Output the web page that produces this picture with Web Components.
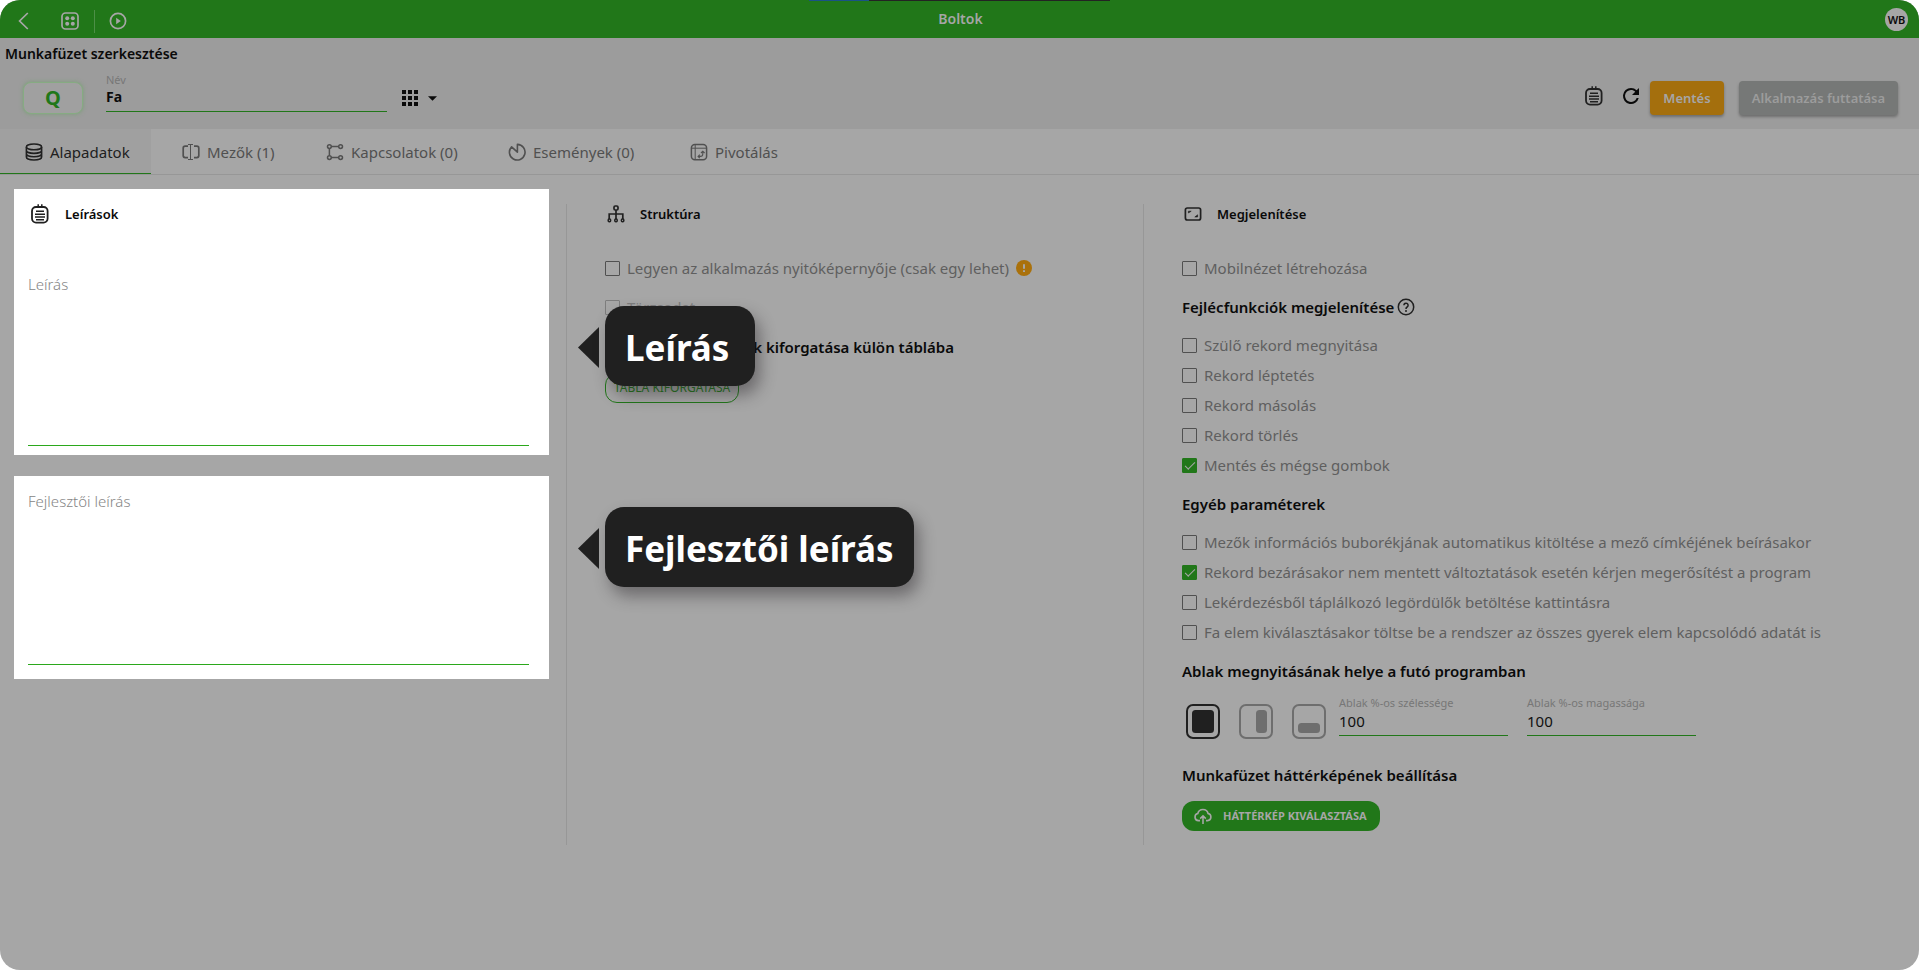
<!DOCTYPE html>
<html lang="hu">
<head>
<meta charset="utf-8">
<title>Munkafüzet szerkesztése</title>
<style>
  html { background: #fff; }
  body { margin: 0; font: 15px/20px "Noto Sans", "Open Sans", sans-serif; color: #0a0a0a; }
  :root {
    --green: #217719; --line: #979797; --paper: #a6a6a6; --bar: #9c9c9c;
  }
</style>
</head>
<body>
<app-shell>
  <top-bar slot="top" name="Boltok" initials="WB"></top-bar>
  <page-head slot="head" heading="Munkafüzet szerkesztése"></page-head>
  <tab-strip slot="tabs"></tab-strip>

  <form-column class="first">
    <focus-card>
      <section-title slot="title" icon="notes">Leírások</section-title>
      <note-field label="Leírás" style="--area: 172px"></note-field>
      <call-out slot="tip" style="--top: 117px">Leírás</call-out>
    </focus-card>
    <focus-card style="padding-bottom: 14px">
      <note-field label="Fejlesztői leírás" style="--area: 174px"></note-field>
      <call-out slot="tip" style="--top: 31px">Fejlesztői leírás</call-out>
    </focus-card>
  </form-column>

  <form-column class="ruled">
    <section-title icon="tree">Struktúra</section-title>
    <check-list style="--step: 39px; --after: 6px">
      <check-row label="Legyen az alkalmazás nyitóképernyője (csak egy lehet)" warn></check-row>
      <check-row label="Törzsadat" disabled></check-row>
    </check-list>
    <sub-title>Megadott adatmezők kiforgatása külön táblába</sub-title>
    <pill-button kind="outline">TÁBLA KIFORGATÁSA</pill-button>
  </form-column>

  <form-column class="ruled">
    <section-title icon="frame">Megjelenítése</section-title>
    <check-list><check-row label="Mobilnézet létrehozása"></check-row></check-list>
    <sub-title help>Fejlécfunkciók megjelenítése</sub-title>
    <check-list>
      <check-row label="Szülő rekord megnyitása"></check-row>
      <check-row label="Rekord léptetés"></check-row>
      <check-row label="Rekord másolás"></check-row>
      <check-row label="Rekord törlés"></check-row>
      <check-row label="Mentés és mégse gombok" checked></check-row>
    </check-list>
    <sub-title>Egyéb paraméterek</sub-title>
    <check-list>
      <check-row label="Mezők információs buborékjának automatikus kitöltése a mező címkéjének beírásakor"></check-row>
      <check-row label="Rekord bezárásakor nem mentett változtatások esetén kérjen megerősítést a program" checked></check-row>
      <check-row label="Lekérdezésből táplálkozó legördülők betöltése kattintásra"></check-row>
      <check-row label="Fa elem kiválasztásakor töltse be a rendszer az összes gyerek elem kapcsolódó adatát is"></check-row>
    </check-list>
    <sub-title>Ablak megnyitásának helye a futó programban</sub-title>
    <window-place></window-place>
    <sub-title>Munkafüzet háttérképének beállítása</sub-title>
    <pill-button kind="solid">HÁTTÉRKÉP KIVÁLASZTÁSA</pill-button>
  </form-column>
</app-shell>

<script>
const svg = (w, h, box, body) =>
  `<svg width="${w}" height="${h}" viewBox="${box}" fill="none" stroke="currentColor" aria-hidden="true">${body}</svg>`;

const ICONS = {
  notes: svg(20, 20, '0 0 20 20', '<rect x="2" y="3" width="15.600" height="15.600" rx="4" stroke-width="1.800"/><path d="M8.200 .2v3M11.800 .2v3M6 7.200h8M5 10.200h10M5 13h10M6 15.800h8" stroke-width="1.500"/>'),
  tree: svg(18, 18, '0 0 18 18', '<rect x="7" y="1" width="4" height="4" rx="1.2" stroke-width="1.7"/><path d="M9 5v9M2.2 14V9h13.6v5" stroke-width="1.7"/><rect x="1.2" y="14" width="2.4" height="2.8" rx="1" stroke-width="1.5"/><rect x="7.8" y="14" width="2.4" height="2.8" rx="1" stroke-width="1.5"/><rect x="14.4" y="14" width="2.4" height="2.8" rx="1" stroke-width="1.5"/>'),
  frame: svg(18, 18, '0 0 18 18', '<rect x="1.4" y="3" width="15.2" height="12" rx="2" stroke-width="1.7"/><path d="M4.400 8V6.200h2.800z M13.600 9.800v2.200h-2.800z" fill="currentColor" stroke-width=".6"/>'),
  data: svg(18, 18, '0 0 18 18', '<ellipse cx="9" cy="3.9" rx="7.6" ry="2.9" stroke-width="1.6"/><path d="M1.4 4v10c0 1.7 3.4 3 7.6 3s7.6-1.3 7.6-3V4M1.4 7.4c0 1.7 3.4 3 7.6 3s7.6-1.3 7.6-3M1.4 10.8c0 1.7 3.4 3 7.6 3s7.6-1.3 7.6-3" stroke-width="1.6"/>'),
  field: svg(18, 18, '0 0 18 18', '<path d="M6 3.200H3.200Q1.200 3.200 1.200 5.200v7.400q0 2 2 2H6M12 3.2h2.8q2 0 2 2v7.4q0 2-2 2H12" stroke-width="1.7"/><path d="M8.500 1v16M6 1.500h5M6 16.500h5" stroke-width="1"/>'),
  links: svg(18, 18, '0 0 18 18', '<g stroke-width="1.5"><circle cx="3.4" cy="3.6" r="1.9"/><circle cx="14.6" cy="3.6" r="1.9"/><circle cx="3.4" cy="14.6" r="1.9"/><circle cx="14.6" cy="14.6" r="1.9"/><path d="M5.4 3.6h7.2M5.4 14.6h7.2M3.4 5.6v7"/></g>'),
  event: svg(18, 18, '0 0 18 18', '<path d="M3.600 3.800A7.800 7.800 0 1 0 9.400 1.400V9.200z" stroke-width="1.6" stroke-linejoin="round"/>'),
  pivot: svg(18, 18, '0 0 18 18', '<rect x="1.400" y="1.400" width="15.200" height="15.400" rx="3.500" stroke-width="1.500"/><path d="M1.400 5.200h15.200M5.200 1.400v15.400" stroke-width="1"/><path d="M8.400 13.400h2q2.400 0 2.400-2.400V8.600M11 10l1.800-1.800 1.800 1.800M9.800 11.700l-1.700 1.700 1.700 1.700" stroke-width="1.100"/>'),
  back: svg(20, 20, '0 0 20 20', '<path d="M14.800 2 6.600 10l8.200 8" stroke-width="1.700"/>'),
  apps: svg(18, 18, '0 0 18 18', '<rect x="1" y="1" width="16" height="16" rx="3.500" stroke-width="1.700"/><g fill="currentColor" stroke="none"><circle cx="6.200" cy="6.200" r="2"/><circle cx="11.800" cy="6.200" r="2"/><circle cx="6.200" cy="11.800" r="2"/><circle cx="11.800" cy="11.800" r="2"/></g>'),
  play: svg(18, 18, '0 0 18 18', '<circle cx="9" cy="9" r="7.600" stroke-width="1.700"/><path d="M7.200 5.800v6.400L11.800 9z" fill="currentColor" stroke="none"/>'),
  reload: svg(24, 24, '0 0 24 24', '<path d="M17.650 6.350A7.958 7.958 0 0 0 12 4a8 8 0 1 0 7.730 10h-2.080A6 6 0 1 1 12 6c1.660 0 3.140.690 4.220 1.780L13 11h7V4z" fill="currentColor" stroke="none"/>'),
  grid: svg(16, 16, '0 0 16 16', '<path d="M0 0h4v4H0zM6 0h4v4H6zM12 0h4v4h-4zM0 6h4v4H0zM6 6h4v4H6zM12 6h4v4h-4zM0 12h4v4H0zM6 12h4v4H6zM12 12h4v4h-4z" fill="currentColor" stroke="none"/>'),
  caret: svg(9, 5, '0 0 10 5', '<path d="M0 0h10L5 5z" fill="currentColor" stroke="none"/>'),
  help: svg(18, 18, '0 0 18 18', '<circle cx="9" cy="9" r="7.700" stroke-width="1.500"/><path d="M6.900 7.300a2.100 2.100 0 1 1 3.300 1.700c-.800.500-1.200.900-1.200 1.900" stroke-width="1.500"/><circle cx="9" cy="12.900" r="1" fill="currentColor" stroke="none"/>'),
  warn: svg(16, 16, '0 0 16 16', '<circle cx="8" cy="8" r="8" fill="#aa710b" stroke="none"/><path d="M8 4.200v4.600M8 10.200v1.800" stroke="#a6a6a6" stroke-width="2"/>'),
  cloud: svg(20, 18, '0 0 20 18', '<path d="M7 13.600H5.400a3.600 3.600 0 0 1-.6-7.100 5.300 5.300 0 0 1 10.300 0 3.600 3.600 0 0 1-.5 7.100H13M10 17V9.200M7.200 11.600 10 8.800l2.800 2.800" stroke-width="1.600"/>'),
};

const define = (name, css, html) => customElements.define(name, class extends HTMLElement {
  connectedCallback() {
    if (this.shadowRoot) return;
    const root = this.attachShadow({ mode: 'open' });
    root.innerHTML = `<style>*,:host{box-sizing:border-box} svg{display:block;flex:none} button{font:inherit;color:inherit;border:0;padding:0;background:none;cursor:pointer} ${css}</style>${html(this)}`;
  }
});

define('app-shell', `
  :host { display: flex; flex-direction: column; min-height: 100vh; background: var(--paper); border-radius: 20px; overflow: hidden; }
  main { display: grid; grid-template-columns: 566fr 577fr 776fr; padding-top: 14px; }
`, () => `<slot name="top"></slot><slot name="head"></slot><slot name="tabs"></slot><main><slot></slot></main>`);

define('top-bar', `
  :host { display: block; background: var(--green); color: #a6a6a6; }
  header { position: relative; display: grid; grid-template-columns: 1fr auto 1fr; align-items: center; height: 38px; padding: 0 11px 0 13px; }
  nav { display: flex; align-items: center; padding-top: 4px; }
  nav button { display: grid; }
  .apps { margin-left: 28px; }
  .play { margin-left: 15px; padding-left: 14px; border-left: 1px solid #4d8f47; height: 23px; align-content: center; }
  h1 { margin: 0; font-size: 14px; line-height: 20px; font-weight: 600; }
  .who { justify-self: end; width: 23px; height: 23px; border-radius: 50%; background: #a6a6a6; color: #0a0a0a; font-size: 11px; line-height: 23px; font-weight: 600; text-align: center; }
  i { position: absolute; top: 0; left: 809px; width: 301px; height: 1px; background: linear-gradient(90deg, #1a5286 60px, #232323 60px); }
`, el => `<header><i></i>
  <nav><button aria-label="Vissza">${ICONS.back}</button><button class="apps" aria-label="Alkalmazások">${ICONS.apps}</button><button class="play" aria-label="Indítás">${ICONS.play}</button></nav>
  <h1>${el.getAttribute('name')}</h1><button class="who">${el.getAttribute('initials')}</button></header>`);

define('page-head', `
  :host { display: block; background: var(--bar); height: 91px; padding: 6px 21px 0 0; }
  h2 { margin: 0 0 0 5px; font: 600 14px/20px "Noto Sans", sans-serif; }
  .row { display: flex; align-items: flex-start; padding: 8px 0 0 23px; }
  .q { width: 60px; height: 32px; margin: 10px 23px 0 0; border: 1px solid #86ab82; border-radius: 8px; background: #a0a0a0; box-shadow: 0 0 4px #7b9e78; color: var(--green); font: 700 20px/28px "Noto Sans", sans-serif; text-align: center; }
  .field { width: 281px; border-bottom: 1px solid var(--green); height: 40px; }
  label { display: block; font-size: 11px; line-height: 16px; color: #777; }
  input { display: block; width: 100%; border: 0; padding: 0; background: none; font: 700 14px/20px "Noto Sans", sans-serif; color: #0a0a0a; outline: 0; height: 18px; }
  .pick { display: flex; align-items: center; gap: 10px; margin: 18px auto 0 15px; }
  .ico { margin: 13px 15px 0 0; height: 22px; display: grid; align-content: center; }
  .save, .run { height: 34px; margin-top: 9px; border-radius: 4px; font-size: 13px; line-height: 34px; font-weight: 600; color: #a6a6a6; box-shadow: 0 2px 3px #6e6e6e; }
  .save { width: 74px; background: #a46f0d; margin-left: 7px; }
  .run { width: 159px; margin-left: 15px; background: #767877; color: #9c9c9c; }
`, el => `<h2>${el.getAttribute('heading')}</h2><div class="row">
  <button class="q">Q</button>
  <div class="field"><label for="n">Név</label><input id="n" value="Fa"></div>
  <button class="pick" aria-label="Ikon választása">${ICONS.grid}${ICONS.caret}</button>
  <button class="ico" aria-label="Jegyzet" style="color:#202020">${ICONS.notes}</button><button class="ico" aria-label="Frissítés" style="margin-right:0">${ICONS.reload}</button>
  <button class="save">Mentés</button><button class="run">Alkalmazás futtatása</button></div>`);

define('tab-strip', `
  :host { display: block; border-bottom: 1px solid var(--line); }
  nav { display: flex; height: 45px; }
  a { display: flex; align-items: center; gap: 7px; padding-left: 26px; color: #505050; font-size: 15px; line-height: 20px; text-decoration: none; white-space: nowrap; }
  a[aria-current] { background: #a0a0a0; color: #202020; box-shadow: inset 0 -1px var(--green); padding-left: 25px; margin-right: 5px; }
`, () => `<nav>${[
    ['data', 'Alapadatok', 151], ['field', 'Mezők (1)', 144], ['links', 'Kapcsolatok (0)', 182],
    ['event', 'Események (0)', 182], ['pivot', 'Pivotálás', 140]
  ].map(([i, t, w], n) => `<a href="#${i}" style="width:${w}px"${n ? '' : ' aria-current="page"'}>${ICONS[i]}${t}</a>`).join('')}</nav>`);

define('form-column', `
  :host { display: block; }
  :host(.first) { padding: 0 17px 0 14px; }
  :host(.ruled) { border-left: 1px solid var(--line); margin-top: 15px; min-height: 641px; padding: 0 10px 0 38px; white-space: nowrap; }
`, () => `<slot></slot>`);

define('section-title', `
  :host { display: flex; align-items: center; height: 20px; margin-left: 2px; gap: 15px; color: #202020; }
  h3 { margin: 0; font-size: 13px; line-height: 20px; font-weight: 600; color: #0a0a0a; }
`, el => `${ICONS[el.getAttribute('icon')]}<h3><slot></slot></h3>`);

define('focus-card', `
  :host { display: block; position: relative; background: #fff; padding: 15px 20px 9px 14px; margin-bottom: 21px; }
  ::slotted([slot=title]) { margin-bottom: 50px; }
`, () => `<slot name="title"></slot><slot></slot><slot name="tip"></slot>`);

define('note-field', `
  :host { display: block; }
  textarea { display: block; width: 100%; height: var(--area); border: 0; border-bottom: 1px solid #2ba81c; padding: 0; margin: 0; resize: none; outline: 0; background: none; font: 15px/20px "Noto Sans", sans-serif; }
  textarea::placeholder { color: #858585; opacity: 1; font-weight: 300; }
`, el => `<textarea aria-label="${el.getAttribute('label')}" placeholder="${el.getAttribute('label')}"></textarea>`);

define('call-out', `
  :host { position: absolute; z-index: 2; left: calc(100% + 29px); top: var(--top); display: flex; align-items: center; color: #fff; white-space: nowrap; }
  svg { margin: 2px 6px 0 0; }
  b { display: block; height: 80px; min-width: 150px; padding: 0 20px; border-radius: 19px; background: #202020; box-shadow: 5px 9px 16px rgba(40,36,40,.45); font: 700 35px/84px "Noto Sans", sans-serif; }
`, () => `<svg width="21" height="41" viewBox="0 0 21 41" fill="#202020"><path d="M21 0v41L0 20.500z"/></svg><b><slot></slot></b>`);

define('sub-title', `
  :host { display: flex; align-items: center; height: 20px; gap: 3px; color: #202020; }
  h4 { margin: 0; font-size: 15px; line-height: 20px; font-weight: 600; color: #0a0a0a; }
`, el => `<h4><slot></slot></h4>${el.hasAttribute('help') ? ICONS.help : ''}`);

define('check-list', `
  :host { display: grid; grid-auto-rows: var(--step, 30px); padding: 13px 0 var(--after, 14px); }
  :host(:nth-of-type(1)) { padding-top: 29px; }
`, () => `<slot></slot>`);

define('check-row', `
  :host { display: flex; align-items: center; height: 30px; gap: 7px; color: #5f5f5f; }
  :host([disabled]) { color: #7d7d7d; }
  label { display: flex; align-items: center; gap: 7px; font-size: 15px; line-height: 20px; }
  input { appearance: none; width: 15px; height: 15px; margin: 0; border: 1px solid #505050; border-radius: 1px; display: grid; }
  :host([disabled]) input { border-color: #7d7d7d; }
  input:checked { background: var(--green); border-color: var(--green); }
  input:checked::after { content: ""; width: 9px; height: 4px; margin: 3px 0 0 2px; border: solid #a6a6a6; border-width: 0 0 1px 1px; transform: rotate(-45deg); }
`, el => `<label><input type="checkbox"${el.hasAttribute('checked') ? ' checked' : ''}${el.hasAttribute('disabled') ? ' disabled' : ''}>${el.getAttribute('label')}</label>${el.hasAttribute('warn') ? ICONS.warn : ''}`);

define('pill-button', `
  :host { display: block; margin-top: 16px; }
  button { display: flex; align-items: center; gap: 10px; height: 30px; border-radius: 12px; line-height: 20px; }
  .outline { padding: 0 8px; border: 1px solid var(--green); color: var(--green); font-size: 12px; }
  .solid { padding: 0 13px 0 11px; background: var(--green); color: #a6a6a6; font-size: 11px; font-weight: 700; }
`, el => { const k = el.getAttribute('kind'); return `<button class="${k}">${k === 'solid' ? ICONS.cloud : ''}<slot></slot></button>`; });

define('window-place', `
  :host { display: flex; margin: 14px 0 26px 4px; height: 44px; align-items: flex-start; }
  .modes { display: flex; gap: 19px; margin: 9px 13px 0 0; height: 35px; color: #6e6e6e; }
  .modes button:first-child { color: #202020; }
  .f { width: 169px; height: 41px; margin-right: 19px; border-bottom: 1px solid var(--green); }
  label { display: block; font-size: 11px; line-height: 16px; color: #777; }
  input { display: block; width: 100%; height: 20px; border: 0; padding: 0; background: none; outline: 0; color: #101010; font: 15px/20px "Noto Sans", sans-serif; }
`, () => {
  const mode = (name, x, y, w, h) => `<button aria-label="${name}">${svg(34, 35, '0 0 34 35', `<rect x="1" y="1" width="32" height="33" rx="6" stroke-width="2"/><rect x="${x}" y="${y}" width="${w}" height="${h}" rx="3.500" fill="currentColor" stroke="none"/>`)}</button>`;
  return `<div class="modes">${mode('Teljes ablak', 6, 6, 22, 23)}${mode('Jobb oldal', 17, 6, 11, 23)}${mode('Alsó sáv', 6, 19, 22, 10)}</div>
  <div class="f"><label for="w">Ablak %-os szélessége</label><input id="w" value="100"></div>
  <div class="f"><label for="h">Ablak %-os magassága</label><input id="h" value="100"></div>`;
});
</script>
</body>
</html>
